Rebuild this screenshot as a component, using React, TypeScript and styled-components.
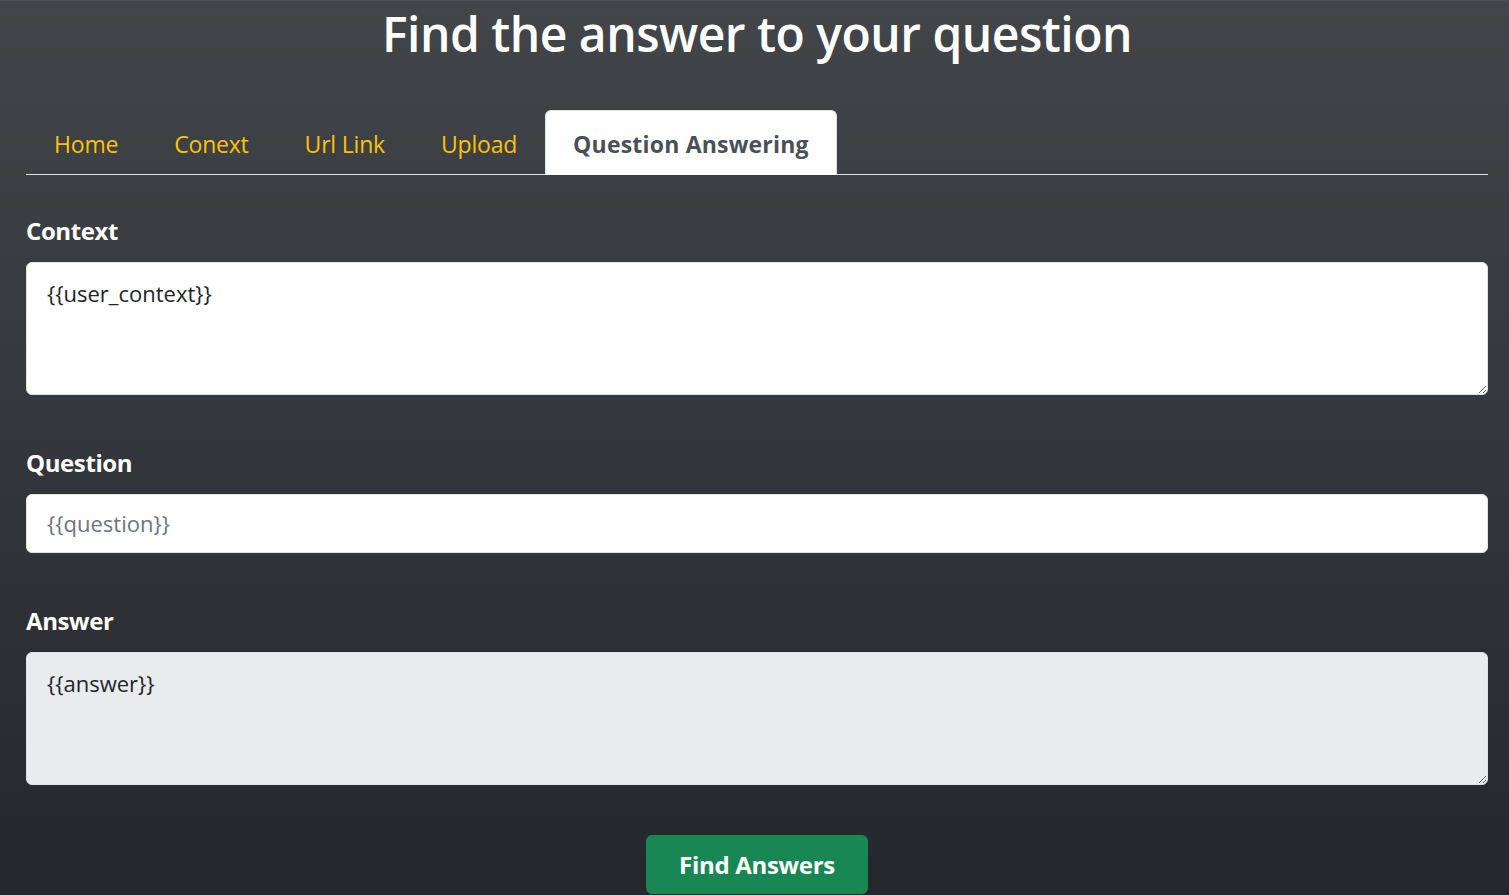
import { createGlobalStyle, styled } from "styled-components";

const GlobalStyle = createGlobalStyle`
  html, body {
    margin: 0;
    padding: 0;
    background: #212529;
  }
  * {
    box-sizing: border-box;
  }
  body {
    font-family: "Open Sans", "Noto Sans", "Liberation Sans", sans-serif;
  }
`;

const Page = styled.div`
  min-height: 100vh;
  border-top: 1px solid #4d5054;
  background-color: #212529;
  background-image: linear-gradient(
    180deg,
    rgba(255, 255, 255, 0.15) 0,
    rgba(255, 255, 255, 0) 990px
  );
  padding: 0 21px 40px 26px;
  color: #fff;
`;

const Title = styled.h1`
  margin: 0;
  padding-top: 4px;
  text-align: center;
  font-size: 48px;
  font-weight: 600;
  line-height: 1.2;
  letter-spacing: -0.5px;
`;

const TabList = styled.ul`
  display: flex;
  list-style: none;
  margin: 47px 0 0;
  padding: 0;
  border-bottom: 1px solid #dee2e6;
`;

const Tab = styled.li<{ $active?: boolean }>`
  margin-bottom: -1px;
  padding: 15px 27px 12px;
  font-size: 23px;
  line-height: 36px;
  letter-spacing: ${(p) => (p.$active ? "0.2px" : "-0.2px")};
  color: ${(p) => (p.$active ? "#495057" : "#ffc107")};
  font-weight: ${(p) => (p.$active ? 700 : 400)};
  background: ${(p) => (p.$active ? "#fff" : "transparent")};
  border: 1px solid ${(p) => (p.$active ? "#dee2e6" : "transparent")};
  border-bottom-color: ${(p) => (p.$active ? "#fff" : "transparent")};
  border-radius: 6px 6px 0 0;
  cursor: pointer;
`;

const Form = styled.form`
  display: flex;
  flex-direction: column;
`;

const Field = styled.div`
  display: flex;
  flex-direction: column;
  margin-top: 38px;

  & + & {
    margin-top: 50px;
  }
`;

const Label = styled.label`
  font-size: 24px;
  font-weight: 700;
  line-height: 36px;
  letter-spacing: -0.4px;
  margin-bottom: 13px;
`;

const TextArea = styled.textarea<{ $readOnly?: boolean }>`
  display: block;
  width: 100%;
  height: 133px;
  padding: 12px 20px;
  font-family: inherit;
  font-size: 22px;
  line-height: 36px;
  color: #212529;
  background: ${(p) => (p.$readOnly ? "#e9ecef" : "#fff")};
  border: 1px solid #dee2e6;
  border-radius: 6px;
  resize: vertical;
  outline: none;

  &::placeholder {
    color: #6c757d;
  }
`;

const Input = styled.input`
  display: block;
  width: 100%;
  height: 59px;
  padding: 10px 20px;
  font-family: inherit;
  font-size: 22px;
  line-height: 36px;
  color: #212529;
  background: #fff;
  border: 1px solid #dee2e6;
  border-radius: 6px;
  outline: none;

  &::placeholder {
    color: #6c757d;
  }
`;

const Actions = styled.div`
  display: flex;
  justify-content: center;
  margin-top: 50px;
`;

const SubmitButton = styled.button`
  width: 222px;
  height: 59px;
  font-family: inherit;
  font-size: 24px;
  font-weight: 700;
  letter-spacing: -0.3px;
  color: #fff;
  background: #198754;
  border: 1px solid #198754;
  border-radius: 6px;
  cursor: pointer;
`;

const tabs = ["Home", "Conext", "Url Link", "Upload", "Question Answering"];

function App() {
  return (
    <>
      <GlobalStyle />
      <Page>
        <Title>Find the answer to your question</Title>
        <TabList>
          {tabs.map((t) => (
            <Tab key={t} $active={t === "Question Answering"}>
              {t}
            </Tab>
          ))}
        </TabList>
        <Form onSubmit={(e) => e.preventDefault()}>
          <Field>
            <Label htmlFor="context">Context</Label>
            <TextArea id="context" defaultValue="{{user_context}}" />
          </Field>
          <Field>
            <Label htmlFor="question">Question</Label>
            <Input id="question" placeholder="{{question}}" />
          </Field>
          <Field>
            <Label htmlFor="answer">Answer</Label>
            <TextArea
              id="answer"
              $readOnly
              readOnly
              defaultValue="{{answer}}"
            />
          </Field>
          <Actions>
            <SubmitButton type="submit">Find Answers</SubmitButton>
          </Actions>
        </Form>
      </Page>
    </>
  );
}

export default App;
